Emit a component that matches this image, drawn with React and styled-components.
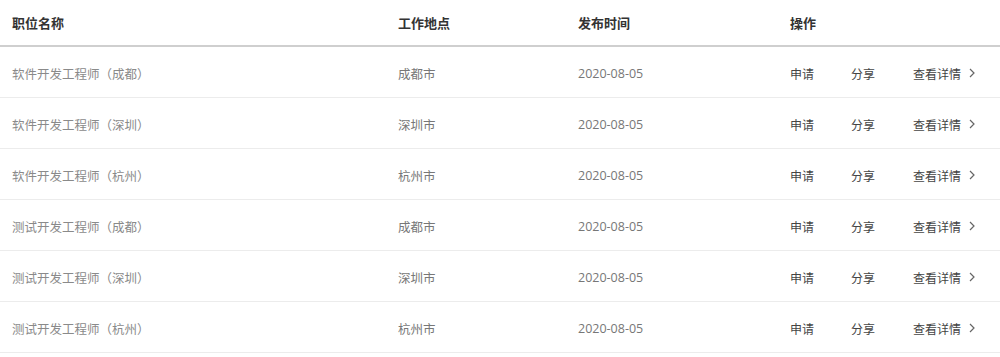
import React from "react";
import styled, { createGlobalStyle } from "styled-components";

const Global = createGlobalStyle`
  html, body { margin: 0; padding: 0; background: #fff; }
  body { font-family: "Noto Sans CJK SC", "Noto Sans", sans-serif; }
  * { box-sizing: border-box; }
`;

const Table = styled.div`
  width: 1000px;
  display: flex;
  flex-direction: column;
`;

const Row = styled.div`
  display: grid;
  grid-template-columns: 386px 180px 212px 1fr;
  align-items: center;
  padding-left: 12px;
  padding-top: ${(p) => (p.$head ? "0" : "2px")};
  height: ${(p) => (p.$head ? "47px" : "51px")};
  border-bottom: ${(p) => (p.$head ? "2px solid #cfcfcf" : "1px solid #ececec")};
`;

const HeadCell = styled.div`
  font-size: 13px;
  font-weight: 700;
  color: #333;
`;

const Cell = styled.div`
  font-size: 12.5px;
  color: ${(p) => (p.$light ? "#8a8a8a" : "#777")};
  font-family: ${(p) => (p.$num ? '"Open Sans", "Noto Sans CJK SC", sans-serif' : "inherit")};
`;

const Actions = styled.div`
  display: flex;
  align-items: center;
`;

const Action = styled.span`
  font-size: 12px;
  color: #444;
  width: ${(p) => p.$w}px;
  cursor: pointer;
`;

const Chevron = styled.svg`
  display: block;
  margin-left: 3px;
`;

const jobs = [
  ["软件开发工程师（成都）", "成都市"],
  ["软件开发工程师（深圳）", "深圳市"],
  ["软件开发工程师（杭州）", "杭州市"],
  ["测试开发工程师（成都）", "成都市"],
  ["测试开发工程师（深圳）", "深圳市"],
  ["测试开发工程师（杭州）", "杭州市"],
];

export default function App() {
  return (
    <Table>
      <Global />
      <Row $head>
        <HeadCell>职位名称</HeadCell>
        <HeadCell>工作地点</HeadCell>
        <HeadCell>发布时间</HeadCell>
        <HeadCell>操作</HeadCell>
      </Row>
      {jobs.map(([name, city]) => (
        <Row key={name}>
          <Cell $light>{name}</Cell>
          <Cell>{city}</Cell>
          <Cell $num>2020-08-05</Cell>
          <Actions>
            <Action $w={61}>申请</Action>
            <Action $w={62}>分享</Action>
            <Action $w={52}>查看详情</Action>
            <Chevron width="8" height="10" viewBox="0 0 8 10">
              <polyline points="2,1 6,5 2,9" fill="none" stroke="#666" strokeWidth="1.2" />
            </Chevron>
          </Actions>
        </Row>
      ))}
    </Table>
  );
}
